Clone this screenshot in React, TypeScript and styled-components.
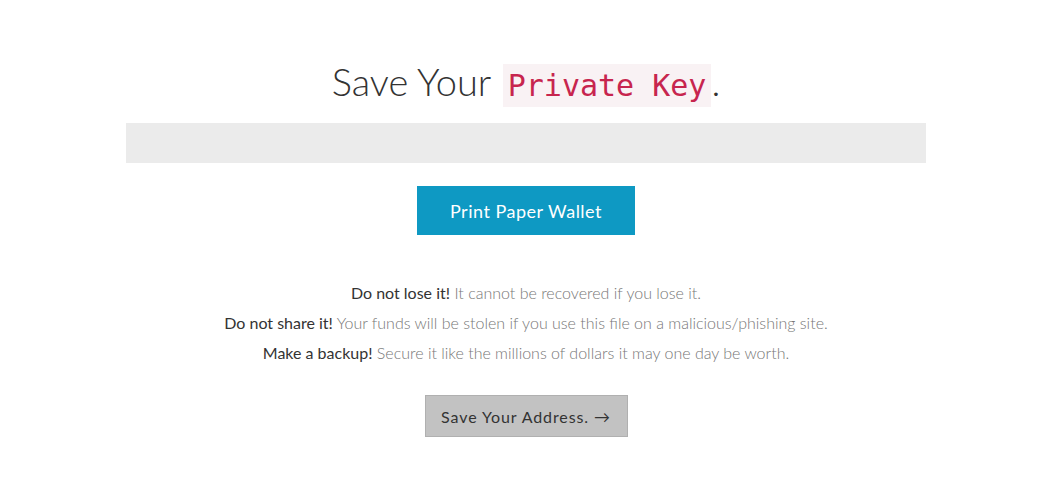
import React from "react";
import styled, { createGlobalStyle } from "styled-components";

const Global = createGlobalStyle`
  html, body { margin: 0; padding: 0; background: #fff; }
  body { font-family: Lato, "Open Sans", sans-serif; color: #333; }
`;

const Page = styled.main`
  display: flex;
  flex-direction: column;
  align-items: center;
  padding: 56px 0 0 4px;
`;

const Title = styled.h1`
  margin: 0;
  font-family: Lato, sans-serif;
  font-weight: 300;
  font-size: 38px;
  line-height: 50px;
  color: #333;
`;

const Code = styled.code`
  font-family: "DejaVu Sans Mono", monospace;
  font-size: 30px;
  line-height: 1;
  color: #c7254e;
  background: #f9f2f4;
  padding: 4px 5px;
  margin-left: 2px;
`;

const KeyField = styled.div`
  width: 800px;
  height: 40px;
  margin-top: 17px;
  background: #ebebeb;
`;

const PrimaryButton = styled.button`
  margin-top: 23px;
  width: 218px;
  height: 49px;
  border: none;
  background: #0e99c3;
  color: #fff;
  font-family: Lato, sans-serif;
  font-size: 18px;
  font-weight: 400;
  letter-spacing: 0.5px;
  cursor: pointer;
`;

const Notes = styled.div`
  margin-top: 43px;
  display: flex;
  flex-direction: column;
  align-items: center;
  font-size: 16px;
  line-height: 30px;
  font-weight: 300;
  color: #777;
`;

const Strong = styled.span`
  font-weight: 400;
  color: #333;
`;

const SecondaryButton = styled.button`
  margin-top: 27px;
  width: 203px;
  height: 42px;
  border: 1px solid #b0b0b0;
  background: #c2c2c2;
  color: #333;
  font-family: Lato, sans-serif;
  font-size: 16px;
  font-weight: 400;
  letter-spacing: 0.9px;
`;

export default function App() {
  return (
    <>
      <Global />
      <Page>
        <Title>
          Save Your <Code>Private Key</Code>.
        </Title>
        <KeyField />
        <PrimaryButton>Print Paper Wallet</PrimaryButton>
        <Notes>
          <div>
            <Strong>Do not lose it!</Strong> It cannot be recovered if you lose it.
          </div>
          <div>
            <Strong>Do not share it!</Strong> Your funds will be stolen if you use this file on a malicious/phishing site.
          </div>
          <div>
            <Strong>Make a backup!</Strong> Secure it like the millions of dollars it may one day be worth.
          </div>
        </Notes>
        <SecondaryButton>Save Your Address. →</SecondaryButton>
      </Page>
    </>
  );
}
